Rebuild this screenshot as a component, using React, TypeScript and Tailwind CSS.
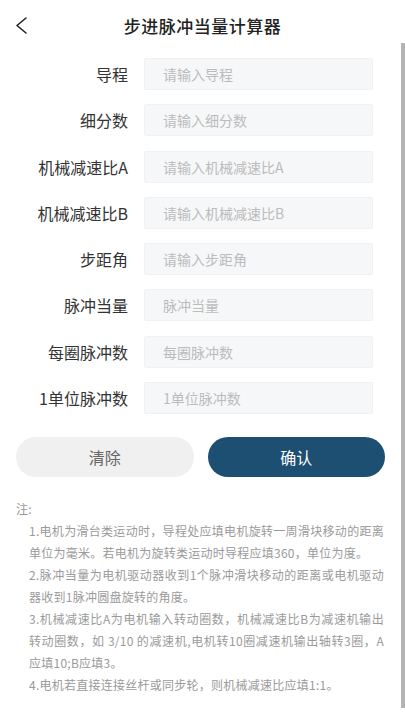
import React from 'react';

const fields = [
  { label: '导程', placeholder: '请输入导程' },
  { label: '细分数', placeholder: '请输入细分数' },
  { label: '机械减速比A', placeholder: '请输入机械减速比A' },
  { label: '机械减速比B', placeholder: '请输入机械减速比B' },
  { label: '步距角', placeholder: '请输入步距角' },
  { label: '脉冲当量', placeholder: '脉冲当量' },
  { label: '每圈脉冲数', placeholder: '每圈脉冲数' },
  { label: '1单位脉冲数', placeholder: '1单位脉冲数' },
];

// each note split at the same places the app wraps it
const notes = [
  ['1.电机为滑台类运动时，导程处应填电机旋转一周滑块移动的距离', '单位为毫米。若电机为旋转类运动时导程应填360，单位为度。'],
  ['2.脉冲当量为电机驱动器收到1个脉冲滑块移动的距离或电机驱动', '器收到1脉冲圆盘旋转的角度。'],
  [
    '3.机械减速比A为电机输入转动圈数，机械减速比B为减速机输出',
    '转动圈数，如 3/10 的减速机,电机转10圈减速机输出轴转3圈，A',
    '应填10;B应填3。',
  ],
  ['4.电机若直接连接丝杆或同步轮，则机械减速比应填1:1。'],
];

function BackIcon() {
  return (
    <svg width="14" height="20" viewBox="0 0 14 20" fill="none">
      <polyline points="12,3 3,10.5 12,18" stroke="#222" strokeWidth="1.6" strokeLinecap="round" strokeLinejoin="round" />
    </svg>
  );
}

export default function App() {
  return (
    <div className="w-[405px] h-[720px] overflow-hidden bg-white font-['Noto_Sans_CJK_SC',sans-serif]">
      <header className="relative flex h-[52px] items-center justify-center">
        <button className="absolute left-[14px] top-[15px]">
          <BackIcon />
        </button>
        <h1 className="text-[17px] font-medium tracking-[0.5px] text-[#222]">步进脉冲当量计算器</h1>
      </header>

      <div className="flex">
        <div className="flex-1">
          <form className="flex flex-col gap-[14.3px] pt-[6px]">
            {fields.map((f) => (
              <div key={f.label} className="flex items-center">
                <label className="w-[128px] text-right text-[16px] text-[#333]">{f.label}</label>
                <input
                  className="ml-[16px] h-[32px] w-[229px] rounded-[2px] border border-[#f0f1f3] bg-[#f6f7f8] pl-[18px] text-[14px] text-[#333] outline-none placeholder:text-[#bcbcbc]"
                  placeholder={f.placeholder}
                />
              </div>
            ))}
          </form>

          <div className="mt-[23px] flex gap-[14px] px-4">
            <button className="h-[40px] flex-1 rounded-full bg-[#f0f0f0] text-[16px] text-[#666]">清除</button>
            <button className="h-[40px] flex-1 rounded-full bg-[#1d4f72] text-[16px] text-white">确认</button>
          </div>

          <div className="mt-[21px] text-[12px] leading-[22px] tracking-[0.25px] text-[#9a9a9a]">
            <p className="pl-4">注:</p>
            <div className="pl-[29px] pr-[17px]">
              {notes.map((lines) => (
                <p key={lines[0]}>
                  {lines.map((line, i) =>
                    i < lines.length - 1 ? (
                      <span key={line} className="block whitespace-nowrap text-justify [text-align-last:justify]">
                        {line}
                      </span>
                    ) : (
                      <span key={line} className="block whitespace-nowrap">
                        {line}
                      </span>
                    ),
                  )}
                </p>
              ))}
            </div>
          </div>
        </div>
        <div className="mt-[-9px] h-[665px] w-[4px] bg-[#b3b3b3]" />
      </div>
    </div>
  );
}
